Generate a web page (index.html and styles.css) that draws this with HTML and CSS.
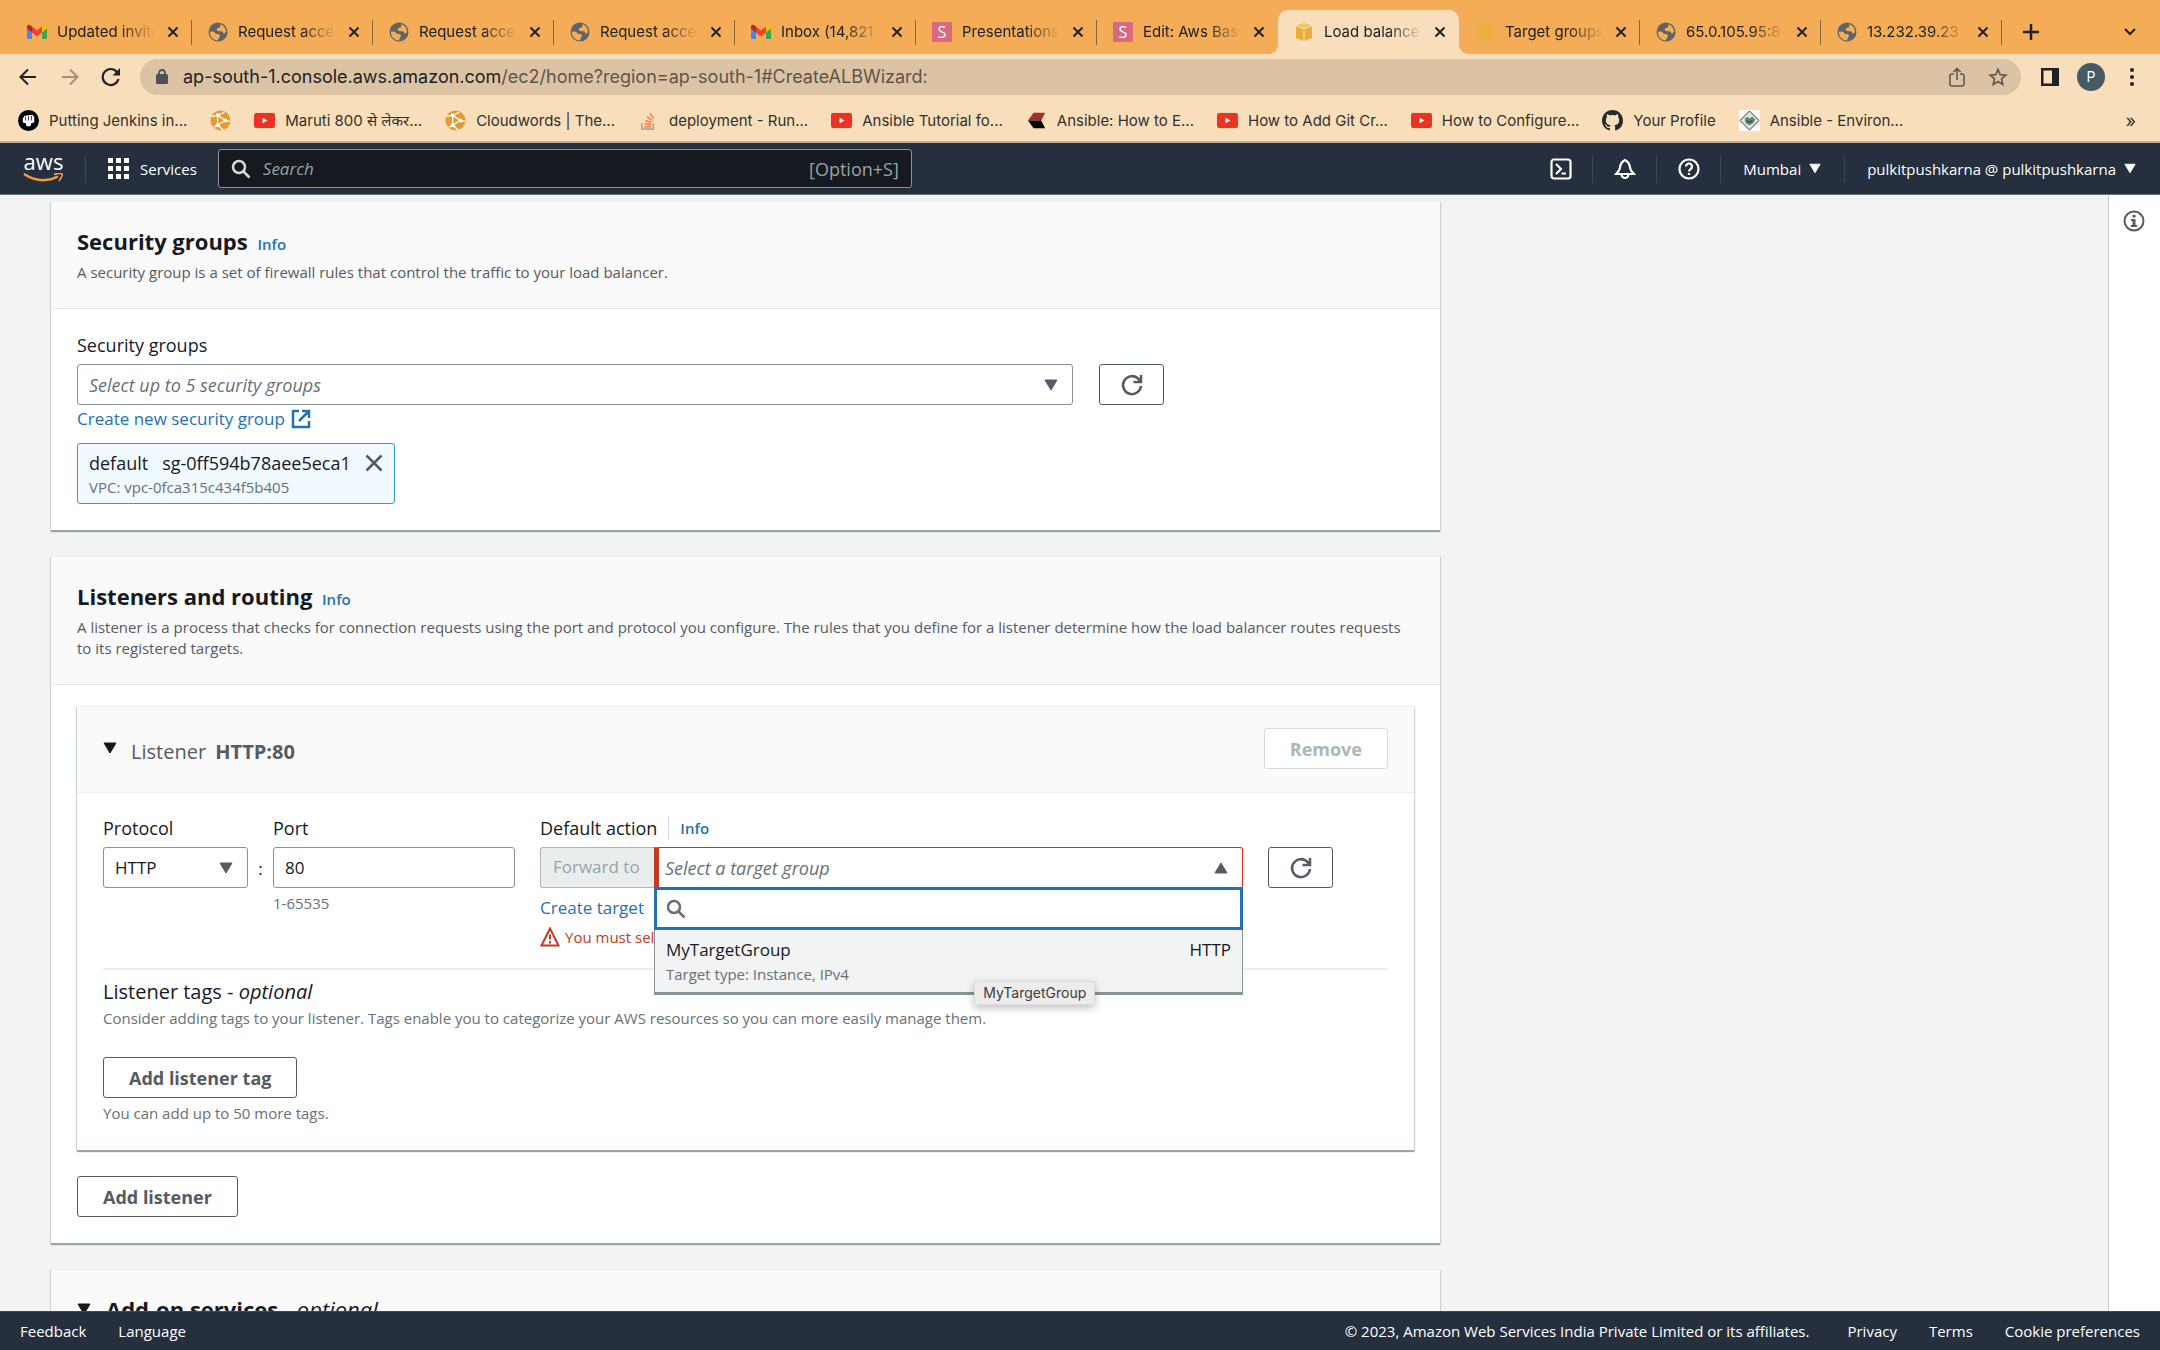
FILE: index.html
```html
<!DOCTYPE html>
<html lang="en">
<head>
<meta charset="utf-8">
<meta name="viewport" content="width=device-width, initial-scale=1">
<title>Load balancers | EC2 Management Console</title>
<link rel="stylesheet" href="styles.css">
</head>
<body>
<svg class="defs" aria-hidden="true">
  <symbol id="gmail" viewBox="0 0 20 20"><path fill="#4285f4" d="M0 5v10.500Q0 17 1.500 17H5V8z"/><path fill="#34a853" d="M20 5v10.500Q20 17 18.500 17H15V8z"/><path fill="#fbbc04" d="M15 4.500L17 3q3-1.200 3 2v1.500l-5 4z"/><path fill="#c5221f" d="M5 4.500L3 3Q0 2 0 5v1.500l5 4z"/><path fill="#ea4335" d="M5 4.500l5 4 5-4v6l-5 4-5-4z"/></symbol>
  <symbol id="globe" viewBox="0 0 20 20"><circle cx="10" cy="10" r="9.500" fill="#5f6368"/><path fill="#f4ad56" d="M2 9.500l4 .3 2 2.200h3l1 2-1.500 2.500-.5 2C5.500 18.500 1.500 15 2 9.500zM12.500 2.300c3 1 5.500 4 5.500 7.700l-2 2-1.500-2.500-4.500-.5-1.500-1 1-2 2.500-.5z"/></symbol>
  <symbol id="cube" viewBox="0 0 20 20"><path fill="#e8ae3c" d="M10 1l8 3v12l-8 3-8-3V4z"/><path fill="#f4c75b" d="M10 1l8 3-8 3-8-3z"/><path stroke="#f9debb" d="M10 7v12M2 4l8 3 8-3" fill="none"/></symbol>
  <symbol id="cube-plain" viewBox="0 0 20 20"><path fill="#e8b23c" d="M10 2l8 2v12l-8 2-8-2V4z"/></symbol>
  <symbol id="close" viewBox="0 0 12 12"><path d="M1.500 1.500l9 9M10.500 1.500l-9 9" stroke="currentColor" stroke-width="2" fill="none"/></symbol>
  <symbol id="cross" viewBox="0 0 18 18"><path d="M1.500 1.500l15 15M16.500 1.500l-15 15" stroke="currentColor" stroke-width="2.500" fill="none"/></symbol>
  <symbol id="youtube" viewBox="0 0 22 16"><rect width="22" height="16" rx="3" fill="#ea3323"/><path d="M9 5l5 3-5 3z" fill="#fff"/></symbol>
  <symbol id="cloudwords" viewBox="0 0 22 22"><circle cx="11" cy="11" r="10.500" fill="#e39a33"/><path d="M1.500 7L8 5.500 16 11l-8 5-4 2M8 5v11M8 5.500l7-3M16 11l5 1M8 16l6 5" stroke="#fff" stroke-width="1.300" fill="none"/><circle cx="8" cy="5.500" r="2" fill="#fff"/><circle cx="16" cy="11" r="2" fill="#fff"/><circle cx="8" cy="16" r="2.200" fill="#fff"/></symbol>
  <symbol id="refresh" viewBox="0 0 24 24"><path d="M21 13a9 9 0 1 1-3.500-8L20.500 8M21 2v7h-7.500" fill="none" stroke="currentColor" stroke-width="2.500"/></symbol>
  <symbol id="search" viewBox="0 0 20 20"><circle cx="8" cy="8" r="6" fill="none" stroke="currentColor" stroke-width="2.500"/><path d="M12.500 12.500l6 6" stroke="currentColor" stroke-width="2.500"/></symbol>
  <symbol id="down" viewBox="0 0 14 12"><path d="M1 1h12L7 11z" fill="currentColor" stroke="currentColor" stroke-linejoin="round"/></symbol>
</svg>

<header class="browser">
  <nav class="tabs" aria-label="Open tabs">
    <a class="tab" href="#"><svg class="fav"><use href="#gmail"/></svg><span class="tab-name">Updated invita</span><svg class="tab-x"><use href="#close"/></svg></a>
    <a class="tab" href="#"><svg class="fav"><use href="#globe"/></svg><span class="tab-name">Request acce</span><svg class="tab-x"><use href="#close"/></svg></a>
    <a class="tab" href="#"><svg class="fav"><use href="#globe"/></svg><span class="tab-name">Request acce</span><svg class="tab-x"><use href="#close"/></svg></a>
    <a class="tab" href="#"><svg class="fav"><use href="#globe"/></svg><span class="tab-name">Request acce</span><svg class="tab-x"><use href="#close"/></svg></a>
    <a class="tab" href="#"><svg class="fav"><use href="#gmail"/></svg><span class="tab-name">Inbox (14,821</span><svg class="tab-x"><use href="#close"/></svg></a>
    <a class="tab" href="#"><span class="fav fav-s">S</span><span class="tab-name">Presentations</span><svg class="tab-x"><use href="#close"/></svg></a>
    <a class="tab no-line" href="#"><span class="fav fav-s">S</span><span class="tab-name">Edit: Aws Bas</span><svg class="tab-x"><use href="#close"/></svg></a>
    <a class="tab active" href="#" aria-current="page"><svg class="fav"><use href="#cube"/></svg><span class="tab-name">Load balance</span><svg class="tab-x"><use href="#close"/></svg></a>
    <a class="tab" href="#"><svg class="fav"><use href="#cube-plain"/></svg><span class="tab-name">Target groups</span><svg class="tab-x"><use href="#close"/></svg></a>
    <a class="tab" href="#"><svg class="fav"><use href="#globe"/></svg><span class="tab-name">65.0.105.95:8</span><svg class="tab-x"><use href="#close"/></svg></a>
    <a class="tab" href="#"><svg class="fav"><use href="#globe"/></svg><span class="tab-name">13.232.39.23</span><svg class="tab-x"><use href="#close"/></svg></a>
    <button class="bare new-tab" type="button" aria-label="New tab"><svg width="16" height="16" viewBox="0 0 16 16"><path d="M8 0v16M0 8h16" stroke="currentColor" stroke-width="2.500"/></svg></button>
    <button class="bare tab-menu" type="button" aria-label="Search tabs"><svg width="12" height="8" viewBox="0 0 12 8"><path d="M1 1l5 5 5-5" fill="none" stroke="currentColor" stroke-width="2"/></svg></button>
  </nav>

  <div class="toolbar">
    <button class="bare nav-btn" type="button" aria-label="Back"><svg width="18" height="18" viewBox="0 0 18 18"><path d="M17 9H2M9 1.500L1.500 9 9 16.500" fill="none" stroke="currentColor" stroke-width="2"/></svg></button>
    <button class="bare nav-btn faded" type="button" aria-label="Forward"><svg width="18" height="18" viewBox="0 0 18 18"><path d="M1 9h15M9 1.500L16.500 9 9 16.500" fill="none" stroke="currentColor" stroke-width="2"/></svg></button>
    <button class="bare nav-btn" type="button" aria-label="Reload"><svg width="20" height="20" viewBox="0 0 20 20"><path d="M17.500 12A8 8 0 1 1 16 5" fill="none" stroke="currentColor" stroke-width="2.200"/><path d="M19 1v7.500h-7.500z" fill="currentColor"/></svg></button>
    <div class="address">
      <svg class="lock" width="12" height="16" viewBox="0 0 12 16"><rect y="5" width="12" height="10" rx="1.500" fill="#4d5156"/><path d="M3 6V4a3 3 0 0 1 6 0v2" fill="none" stroke="#4d5156" stroke-width="1.800"/></svg>
      <span class="url">ap-south-1.console.aws.amazon.com<span class="path">/ec2/home?region=ap-south-1#CreateALBWizard:</span></span>
      <button class="bare" type="button" aria-label="Share"><svg width="16" height="20" viewBox="0 0 16 20"><path d="M5 7H3a2 2 0 0 0-2 2v8a2 2 0 0 0 2 2h10a2 2 0 0 0 2-2V9a2 2 0 0 0-2-2h-2M8 13V2M4.500 5L8 1.500 11.500 5" fill="none" stroke="currentColor" stroke-width="1.600"/></svg></button>
      <button class="bare" type="button" aria-label="Bookmark this tab"><svg width="20" height="20" viewBox="0 0 20 20"><path d="M10 2.500l2.200 5.200 5.600.5-4.300 3.700 1.300 5.500-4.800-2.900-4.800 2.900 1.300-5.500L2.200 8.200l5.600-.5z" fill="none" stroke="currentColor" stroke-width="1.700"/></svg></button>
    </div>
    <button class="bare panel-btn" type="button" aria-label="Side panel"><svg width="18" height="18" viewBox="0 0 18 18"><path d="M0 0h18v18H0zM2.500 2.500v13H11v-13z" fill="#202124" fill-rule="evenodd"/></svg></button>
    <button class="avatar" type="button">P</button>
    <button class="bare more" type="button" aria-label="Menu"><svg width="4" height="18" viewBox="0 0 4 18" fill="currentColor"><circle cx="2" cy="2" r="2"/><circle cx="2" cy="9" r="2"/><circle cx="2" cy="16" r="2"/></svg></button>
  </div>

  <nav class="bookmarks" aria-label="Bookmarks">
    <a href="#"><svg viewBox="0 0 22 22"><circle cx="11" cy="11" r="11" fill="#000"/><path d="M5 9l2-3 8-1 2 2v6l-3 1-1 3H9l-1-3-3-1z" fill="#fff"/><path d="M8 7v4M11 6.500V11M14 6v5" stroke="#000" stroke-width=".8"/></svg>Putting Jenkins in...</a>
    <a href="#" aria-label="Cloudwords"><svg viewBox="0 0 22 22"><use href="#cloudwords"/></svg></a>
    <a href="#"><svg viewBox="0 0 22 16"><use href="#youtube"/></svg>Maruti 800 से लेकर...</a>
    <a href="#"><svg viewBox="0 0 22 22"><use href="#cloudwords"/></svg>Cloudwords | The...</a>
    <a href="#"><svg viewBox="0 0 22 22"><path d="M4 14v6h12v-6" fill="none" stroke="#a9a9a9" stroke-width="1.800"/><path d="M6.500 17.500h7M6.500 14.500l7 .7M7.500 11l6.500 2M9.500 7l5.500 4M12.500 3.500l4 5.500" stroke="#ef8236" stroke-width="1.600"/></svg>deployment - Run...</a>
    <a href="#"><svg viewBox="0 0 22 16"><use href="#youtube"/></svg>Ansible Tutorial fo...</a>
    <a href="#"><svg viewBox="0 0 22 22"><path d="M8 3h12l-4 8H2z" fill="#a4302c"/><path d="M2 11h14l4 8H8z" fill="#000"/></svg>Ansible: How to E...</a>
    <a href="#"><svg viewBox="0 0 22 16"><use href="#youtube"/></svg>How to Add Git Cr...</a>
    <a href="#"><svg viewBox="0 0 22 16"><use href="#youtube"/></svg>How to Configure...</a>
    <a href="#"><svg viewBox="0 0 16 16"><path fill="#24292f" d="M8 0C3.580 0 0 3.580 0 8c0 3.540 2.290 6.530 5.470 7.590.4.070.55-.17.55-.38 0-.19-.01-.82-.01-1.490-2.010.37-2.530-.49-2.690-.94-.09-.23-.48-.94-.82-1.130-.28-.15-.68-.52-.01-.53.63-.01 1.080.58 1.230.82.72 1.210 1.870.87 2.330.66.07-.52.28-.87.51-1.070-1.780-.2-3.640-.89-3.640-3.950 0-.87.31-1.590.82-2.150-.08-.2-.36-1.020.08-2.120 0 0 .67-.21 2.200.82.64-.18 1.320-.27 2-.27s1.360.09 2 .27c1.530-1.040 2.200-.82 2.200-.82.44 1.100.16 1.920.08 2.120.51.56.82 1.270.82 2.150 0 3.070-1.870 3.750-3.650 3.950.29.25.54.73.54 1.480 0 1.070-.01 1.930-.01 2.200 0 .21.15.46.55.38A8.010 8.010 0 0 0 16 8c0-4.420-3.580-8-8-8z"/></svg>Your Profile</a>
    <a href="#"><svg viewBox="0 0 22 22"><path d="M0 0h22v22H0z" fill="#fff"/><path d="M11 1l10 10-10 10L1 11z" fill="#dde3dd" stroke="#333"/><path d="M6 9l3-2 2 2 3-2 3 3-2 4-4 2-4-2z" fill="#5c8a6b"/><path d="M8 11l3 2 3-2" stroke="#223" fill="none"/></svg>Ansible - Environ...</a>
    <button class="bare overflow" type="button" aria-label="More bookmarks">»</button>
  </nav>
</header>

<header class="console-bar">
  <a class="aws" href="#" aria-label="AWS home"><span>aws</span><svg width="40" height="10" viewBox="0 0 40 10"><path d="M1 1q17 11 34 2.500" fill="none" stroke="#f29d38" stroke-width="2.500"/><path d="M31 1.500q7-2 8-.5t-3 7" fill="none" stroke="#f29d38" stroke-width="1.800"/></svg></a>
  <button class="bar-btn services" type="button"><svg width="21" height="21" viewBox="0 0 21 21" fill="currentColor"><path d="M0 0h5v5H0zM8 0h5v5H8zM16 0h5v5h-5zM0 8h5v5H0zM8 8h5v5H8zM16 8h5v5h-5zM0 16h5v5H0zM8 16h5v5H8zM16 16h5v5h-5z"/></svg>Services</button>
  <label class="bar-search"><svg width="20" height="20"><use href="#search"/></svg><input type="search" placeholder="Search" aria-label="Search"><kbd>[Option+S]</kbd></label>
  <div class="bar-right">
    <button class="bar-btn icon-btn" type="button" aria-label="CloudShell"><svg width="22" height="22" viewBox="0 0 22 22" fill="none" stroke="currentColor" stroke-width="2.200"><rect x="1.500" y="1.500" width="19" height="19" rx="2.500"/><path d="M6 6l5 5-5 5M11.500 15.500H16"/></svg></button>
    <button class="bar-btn icon-btn" type="button" aria-label="Notifications"><svg width="22" height="22" viewBox="0 0 22 22" fill="none" stroke="currentColor" stroke-width="2.200"><path d="M11 2C8 3.500 6.500 5 6 9.500L5 12.500 2 16h18l-3-3.500-1-3C15.500 5 14 3.500 11 2zM7.500 16.500a3.500 3.500 0 0 0 7 0"/></svg></button>
    <button class="bar-btn icon-btn" type="button" aria-label="Help"><svg width="22" height="22" viewBox="0 0 22 22" fill="none" stroke="currentColor" stroke-width="2.200"><circle cx="11" cy="11" r="9.500"/><path d="M8 8.500a3 3 0 1 1 4.500 2.600Q11 12 11 13.500M11 15v2"/></svg></button>
    <button class="bar-btn region" type="button">Mumbai<svg width="12" height="11"><use href="#down"/></svg></button>
    <button class="bar-btn account" type="button">pulkitpushkarna @ pulkitpushkarna<svg width="12" height="11"><use href="#down"/></svg></button>
  </div>
</header>

<div class="workspace">
  <main class="content">
    <section class="card">
      <div class="card-head">
        <h2>Security groups <a class="info" href="#">Info</a></h2>
        <p>A security group is a set of firewall rules that control the traffic to your load balancer.</p>
      </div>
      <div class="card-body">
        <label class="label" for="sg">Security groups</label>
        <div class="sg-row">
          <div class="select"><select id="sg" class="hint"><option>Select up to 5 security groups</option></select><svg width="14" height="12"><use href="#down"/></svg></div>
          <button class="btn square" type="button" aria-label="Refresh security groups"><svg width="24" height="24"><use href="#refresh"/></svg></button>
        </div>
        <a class="link create-sg" href="#">Create new security group <svg width="20" height="20" viewBox="0 0 20 20"><path d="M8 2H2v16h16v-6M11 2h7v7M17.500 2.500L8 12" fill="none" stroke="currentColor" stroke-width="2.500"/></svg></a>
        <div class="token">
          <div class="token-name"><span>default</span><span>sg-0ff594b78aee5eca1</span><button class="bare" type="button" aria-label="Remove default"><svg width="18" height="18"><use href="#cross"/></svg></button></div>
          <div class="small sub">VPC: vpc-0fca315c434f5b405</div>
        </div>
      </div>
    </section>

    <section class="card">
      <div class="card-head">
        <h2>Listeners and routing <a class="info" href="#">Info</a></h2>
        <p>A listener is a process that checks for connection requests using the port and protocol you configure. The rules that you define for a listener determine how the load balancer routes requests to its registered targets.</p>
      </div>
      <div class="card-body routing-body">
        <section class="card listener">
          <div class="listener-head">
            <svg width="14" height="12"><use href="#down"/></svg>
            <h3>Listener <b>HTTP:80</b></h3>
            <button class="btn" type="button" disabled>Remove</button>
          </div>
          <div class="listener-body">
            <div class="fields">
              <div class="protocol">
                <label class="label" for="protocol">Protocol</label>
                <div class="select"><select id="protocol"><option>HTTP</option></select><svg width="14" height="12"><use href="#down"/></svg></div>
              </div>
              <span class="colon">:</span>
              <div class="port">
                <label class="label" for="port">Port</label>
                <input id="port" class="input" type="text" value="80">
                <div class="small port-help">1-65535</div>
              </div>
              <div class="action">
                <div class="label action-label"><label for="target">Default action</label><a class="info" href="#">Info</a></div>
                <div class="action-row">
                  <span class="forward">Forward to</span>
                  <div class="select target-select">
                    <select id="target" class="hint"><option>Select a target group</option></select><svg class="up" width="14" height="12"><use href="#down"/></svg>
                    <div class="dropdown">
                      <label class="filter"><svg width="20" height="20"><use href="#search"/></svg><input type="text" aria-label="Filter target groups"></label>
                      <div class="option"><div class="option-top"><span>MyTargetGroup</span><span>HTTP</span></div><div class="small sub">Target type: Instance, IPv4</div><span class="tooltip" role="tooltip">MyTargetGroup</span></div>
                    </div>
                  </div>
                </div>
                <a class="link create-target" href="#">Create target</a>
                <div class="error"><svg width="20" height="20" viewBox="0 0 20 20"><path d="M10 1.500L18.500 18.500h-17z" fill="none" stroke="currentColor" stroke-width="2"/><path d="M10 7.500v5M10 14v2.500" stroke="currentColor" stroke-width="2"/></svg><span>You must sel</span></div>
              </div>
              <button class="btn square action-refresh" type="button" aria-label="Refresh target groups"><svg width="24" height="24"><use href="#refresh"/></svg></button>
            </div>
            <div class="tags">
              <h4>Listener tags - <i>optional</i></h4>
              <p class="small">Consider adding tags to your listener. Tags enable you to categorize your AWS resources so you can more easily manage them.</p>
              <button class="btn" type="button">Add listener tag</button>
              <p class="small">You can add up to 50 more tags.</p>
            </div>
          </div>
        </section>
        <button class="btn add-listener" type="button">Add listener</button>
      </div>
    </section>

    <section class="card">
      <div class="card-head addon">
        <svg width="14" height="12"><use href="#down"/></svg>
        <h2>Add-on services - <i>optional</i></h2>
      </div>
    </section>
  </main>
  <aside class="help-panel"><button class="bare" type="button" aria-label="Open help panel"><svg width="22" height="22" viewBox="0 0 22 22"><circle cx="11" cy="11" r="9.500" fill="none" stroke="currentColor" stroke-width="2"/><path d="M9.500 5h3v2.500h-3zM8 9h4.500v6H14v2H8v-2h1.500v-4H8z" fill="currentColor"/></svg></button></aside>
</div>

<footer class="footer">
  <a href="#">Feedback</a><a href="#">Language</a>
  <span class="copyright">© 2023, Amazon Web Services India Private Limited or its affiliates.</span>
  <a href="#">Privacy</a><a href="#">Terms</a><a href="#">Cookie preferences</a>
</footer>
</body>
</html>
```
FILE: styles.css
```css
* { box-sizing: border-box; }
body {
  margin: 0;
  height: 100vh;
  display: flex;
  flex-direction: column;
  overflow: hidden;
  font: 17px/24px "Open Sans", "Noto Sans", sans-serif;
  color: #16191f;
  background: #f2f3f3;
}
h2, h3, h4, p { margin: 0; }
a { color: inherit; text-decoration: none; }
button, input, select { font: inherit; color: inherit; }
svg { display: block; flex: none; }
.defs { position: absolute; width: 0; height: 0; }
.bare { display: flex; align-items: center; padding: 0; border: 0; background: none; }

/* Browser chrome */
.browser {
  flex: none;
  font: 15px/20px Inter, "Noto Sans", sans-serif;
  color: #202124;
  background: #f9debb;
  border-bottom: 2px solid #c4ae92;
}
.tabs {
  display: flex;
  align-items: center;
  height: 54px;
  padding: 10px 24px 0 11px;
  background: #f4ad56;
}
.tab {
  position: relative;
  flex: 0 1 181px;
  min-width: 0;
  display: flex;
  align-items: center;
  height: 44px;
  padding: 0 13px 0 16px;
}
.tab::after {
  content: "";
  position: absolute;
  right: 0;
  top: 10px;
  width: 1px;
  height: 25px;
  background: #8a6436;
}
.tab.no-line::after { display: none; }
.fav { width: 20px; height: 20px; margin-right: 10px; }
.fav-s {
  background: #d86a7f;
  color: #fff;
  font: 16px/20px "Open Sans", sans-serif;
  text-align: center;
}
.tab-name {
  flex: 1;
  min-width: 0;
  overflow: hidden;
  white-space: nowrap;
  -webkit-mask-image: linear-gradient(90deg, #000 65%, transparent);
  mask-image: linear-gradient(90deg, #000 65%, transparent);
}
.tab-x { width: 12px; height: 12px; margin-left: 12px; }
.tab.active { background: #f9debb; border-radius: 10px 10px 0 0; }
.tab.active::before, .tab.active::after {
  content: "";
  position: absolute;
  top: auto;
  bottom: 0;
  width: 10px;
  height: 10px;
}
.tab.active::before { left: -10px; background: radial-gradient(circle at 0 0, transparent 10px, #f9debb 10px); }
.tab.active::after { right: -10px; background: radial-gradient(circle at 100% 0, transparent 10px, #f9debb 10px); }
.new-tab { margin-left: 21px; }
.tab-menu { margin-left: auto; }

.toolbar {
  display: flex;
  align-items: center;
  padding: 5px 26px 5px 19px;
}
.nav-btn { width: 20px; margin-right: 22px; }
.nav-btn + .nav-btn { margin-right: 20px; }
.nav-btn + .address { margin-left: -1px; }
.faded { color: #9f907b; }
.address {
  flex: 1;
  display: flex;
  align-items: center;
  gap: 23px;
  height: 36px;
  margin-right: 20px;
  padding: 0 13px 0 16px;
  border-radius: 18px;
  background: #dbc3a4;
  color: #5f5a55;
}
.lock { margin-right: -8px; }
.url { flex: 1; font-size: 18px; color: #202124; }
.path { color: #5d554c; }
.panel-btn { margin-right: 18px; }
.avatar {
  width: 28px;
  height: 28px;
  margin-right: 25px;
  padding: 0;
  border: 0;
  border-radius: 14px;
  background: #455a64;
  color: #fff;
  font-size: 14px;
}

.bookmarks {
  display: flex;
  align-items: center;
  gap: 23px;
  height: 41px;
  padding: 0 24px 0 18px;
  color: #33302c;
}
.bookmarks a { display: flex; align-items: center; gap: 10px; white-space: nowrap; }
.bookmarks a svg { width: 21px; height: 21px; }
.overflow { margin-left: auto; font-size: 18px; }

/* AWS console bar */
.console-bar {
  flex: none;
  display: flex;
  align-items: center;
  height: 52px;
  padding: 0 24px 0 23px;
  background: #252f3e;
  border-bottom: 1px solid #687078;
  color: #fff;
  font-size: 15px;
}
.aws { width: 41px; font-size: 22px; line-height: 18px; text-align: center; }
.aws span { display: block; height: 19px; line-height: 14px; }
.bar-btn {
  display: flex;
  align-items: center;
  height: 28px;
  padding: 0;
  border: 0;
  background: none;
  font-weight: 500;
  white-space: nowrap;
}
.services { gap: 11px; margin: 0 21px; padding-left: 22px; border-left: 1px solid #414750; }
.bar-search {
  flex: 0 1 694px;
  display: flex;
  align-items: center;
  gap: 12px;
  height: 39px;
  padding: 0 12px;
  border: 1px solid #879596;
  border-radius: 3px;
  background: #16191f;
  color: #d5dbdb;
}
.bar-search input { flex: 1; min-width: 0; padding: 0; border: 0; outline: 0; background: none; font-size: 17px; }
.bar-search input::placeholder { color: #95a5a6; font-style: italic; opacity: 1; }
.bar-search kbd { font: inherit; font-size: 18px; color: #95a5a6; }
.bar-right { display: flex; margin-left: auto; }
.bar-right .bar-btn + .bar-btn { border-left: 1px solid #414750; }
.icon-btn { padding: 0 20px 0 21px; }
.region, .account { gap: 8px; padding: 0 23px 0 22px; }
.account { padding-right: 0; }

/* Page */
.workspace { flex: 1; min-height: 0; display: flex; }
.content {
  flex: 1;
  min-width: 0;
  display: flex;
  flex-direction: column;
  gap: 26px;
  padding: 6px 26px 0 51px;
  overflow: hidden;
}
.card {
  flex: none;
  width: 100%;
  max-width: 1389px;
  background: #fff;
  border-top: 1px solid #eaeded;
  box-shadow: 0 2px 1px #9ba5a9, 1px 1px 1px #d5dbdb, -1px 1px 1px #d5dbdb;
}
.card-head {
  padding: 25px 26px;
  background: #fafafa;
  border-bottom: 1px solid #eaeded;
}
.card-head h2 { font-size: 22px; line-height: 28px; }
.card-head p { margin-top: 4px; font-size: 15px; line-height: 21px; color: #545b64; }
.info { margin-left: 4px; font-size: 15px; font-weight: 600; color: #2470b8; }
.card-body { padding: 24px 26px 26px; }
.label { display: block; margin-bottom: 7px; font-size: 18px; }
.small { font-size: 15px; line-height: 21px; color: #687078; }
.sub { margin-top: 2px; }
.link { color: #2470b8; }

.select { position: relative; }
.select select, .input {
  display: block;
  width: 100%;
  height: 41px;
  padding: 0 11px;
  border: 1px solid #879596;
  border-radius: 3px;
  background: #fff;
  font-size: 17px;
  appearance: none;
}
.select select.hint { font-size: 18px; font-style: italic; color: #687078; }
.select > svg { position: absolute; right: 15px; top: 15px; color: #545b64; pointer-events: none; }
.select > svg.up { transform: rotate(180deg); }
.btn {
  display: flex;
  align-items: center;
  justify-content: center;
  height: 41px;
  padding: 0 25px;
  border: 1px solid #545b64;
  border-radius: 3px;
  background: #fff;
  color: #545b64;
  font-size: 18px;
  font-weight: 700;
}
.btn:disabled { border-color: #d5dbdb; color: #aab7b8; }
.square { flex: none; width: 65px; padding: 0; }

.sg-row { display: flex; gap: 26px; }
.sg-row .select { flex: 0 1 996px; }
.create-sg { display: flex; align-items: center; gap: 6px; width: fit-content; margin-top: 2px; }
.token {
  width: fit-content;
  height: 61px;
  margin-top: 12px;
  padding: 7px 11px;
  border: 1px solid #2ea0c9;
  border-radius: 3px;
  background: #f1faff;
}
.token-name { display: flex; align-items: center; gap: 14px; font-size: 18px; }
.token-name .bare { color: #545b64; }

.routing-body { padding-top: 21px; }
.listener-head {
  display: flex;
  gap: 14px;
  padding: 21px 26px 23px;
  background: #fafafa;
  border-bottom: 1px solid #eaeded;
}
.listener-head svg { margin-top: 14px; }
.listener-head h3 { flex: 1; font-size: 20px; line-height: 48px; height: 41px; font-weight: 400; color: #545b64; }
.listener-head h3 b { margin-left: 4px; }
.listener-body { padding: 23px 26px 26px; }
.fields { display: flex; padding-bottom: 21px; border-bottom: 2px solid #eaeded; }
.protocol { flex: 0 1 145px; }
.colon { width: 25px; padding-top: 41px; text-align: center; }
.port { flex: 0 1 242px; }
.port-help { margin-top: 5px; }
.action { flex: 0 1 703px; margin-left: 25px; }
.action-label { display: flex; align-items: center; }
.action-label .info { margin-left: 11px; padding-left: 11px; border-left: 1px solid #d5dbdb; }
.action-row { display: flex; }
.forward {
  flex: none;
  width: 114px;
  height: 41px;
  padding-left: 12px;
  border: 1px solid #aab7b8;
  border-right: 0;
  border-radius: 3px 0 0 3px;
  background: #eaeded;
  color: #95a5a6;
  font-size: 17px;
  line-height: 38px;
}
.target-select { flex: 1; }
.target-select > select { padding-left: 6px; border-color: #d13212; border-left: 5px solid #c5391f; border-radius: 0 3px 0 0; }
.dropdown { position: absolute; left: 0; right: 0; top: 40px; z-index: 1; background: #fff; }
.filter { display: flex; align-items: center; height: 43px; padding: 0 9px; border: 3px solid #2470b8; color: #687078; }
.filter input { flex: 1; min-width: 0; border: 0; outline: 0; background: none; }
.option {
  position: relative;
  height: 65px;
  padding: 8px 11px 0;
  background: #f2f3f3;
  border: 1px solid #879596;
  border-top: 0;
  border-bottom: 3px solid #879596;
}
.option-top { display: flex; justify-content: space-between; }
.tooltip {
  position: absolute;
  left: 52%;
  top: 51px;
  margin-left: 14px;
  width: max-content;
  padding: 1px 8px;
  border: 1px solid #dcdcdc;
  background: #ececec;
  box-shadow: 0 3px 8px rgba(0, 0, 0, .25);
  color: #3c3c3c;
  font: 14px/20px Inter, sans-serif;
}
.create-target { display: block; margin-top: 8px; }
.error { display: flex; align-items: center; gap: 5px; margin-top: 7px; color: #c5391f; font-size: 15px; line-height: 20px; }
.action-refresh { margin: 31px 0 0 25px; }

.tags { padding-top: 9px; }
.tags h4 { font-size: 20px; font-weight: 400; line-height: 26px; margin-bottom: 3px; }
.tags .btn { margin: 28px 0 5px; }
.add-listener { margin-top: 26px; }
.addon { display: flex; align-items: center; gap: 15px; padding-bottom: 48px; }
.addon i { font-weight: 400; }

.help-panel { flex: none; width: 52px; padding: 15px 0 0 14px; border-left: 1px solid #c6cccc; background: #fff; color: #545b64; }

.footer {
  flex: none;
  display: flex;
  align-items: center;
  gap: 32px;
  height: 39px;
  padding: 0 20px;
  border-top: 1px solid #414750;
  background: #252f3e;
  color: #fff;
  font-size: 15px;
}
.copyright { margin-left: auto; margin-right: 6px; }
```
